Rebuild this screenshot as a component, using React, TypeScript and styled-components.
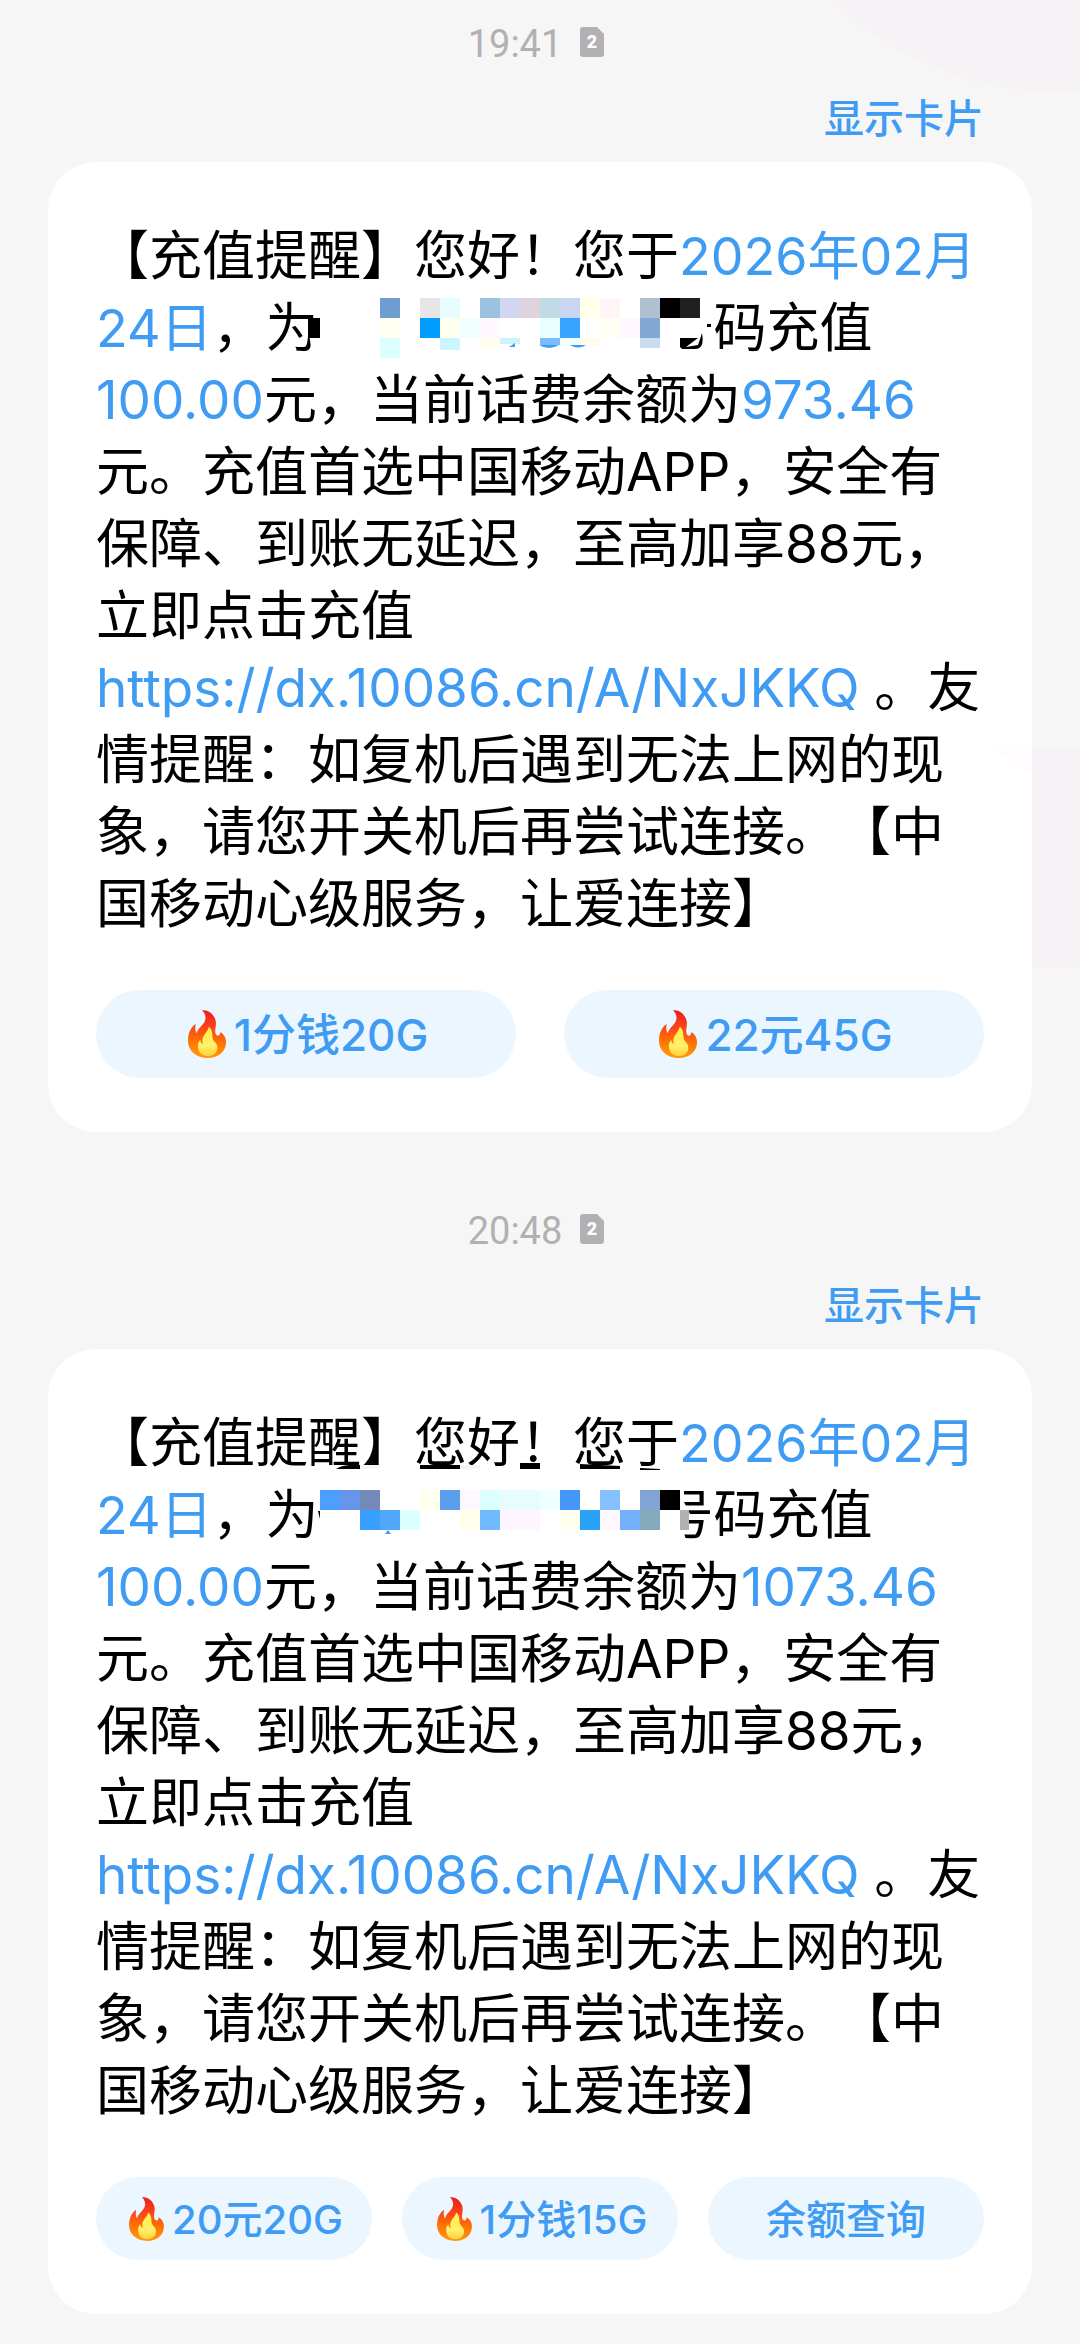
import React from "react";
import styled, { createGlobalStyle } from "styled-components";

const GlobalStyle = createGlobalStyle`
  * { box-sizing: border-box; }
  body {
    margin: 0;
    background: #f6f6f6;
    font-family: Inter, "Noto Sans CJK SC", sans-serif;
    text-spacing-trim: space-all;
  }
`;

const Page = styled.main`
  position: relative;
  overflow: hidden;
  min-height: 100vh;
  padding: 20px 48px 30px;
  display: flex;
  flex-direction: column;
  gap: 75px;
  background: #f6f6f6;
`;

const Glow = styled.svg`
  position: absolute;
  z-index: 1;
  top: 0;
  right: 0;
  fill: #f6f2f5;
  pointer-events: none;
`;

const Entry = styled.article`
  display: flex;
  flex-direction: column;
`;

const Stamp = styled.header`
  display: flex;
  justify-content: center;
  align-items: center;
  gap: 18px;
  height: 44px;
  padding-right: 8px;
  color: #b2b0b2;
  font: 400 38px/40px Roboto, sans-serif;
`;

const Time = styled.time`
  padding-top: 4px;
`;

const ShowCard = styled.a`
  align-self: flex-end;
  margin: 31px 0 19px;
  padding-right: 48px;
  color: #409cf3;
  font-size: 40px;
  font-weight: 500;
  line-height: 48px;
  text-decoration: none;
`;

const Card = styled.section`
  padding: 58px 48px 54px;
  border-radius: 48px;
  background: #fff;
`;

const Body = styled.p`
  margin: 0 0 50px;
  color: #000;
  font-size: 53px;
  line-height: 72px;
  white-space: nowrap;
`;

const Mark = styled.a`
  color: #409cf3;
  text-decoration: none;
`;

const DateMark = styled(Mark)`
  font-size: 52px;
  line-height: 1;
`;

const Hidden = styled.span`
  position: relative;
  display: inline-block;
  width: 342px;
  height: 1px;
`;

const Pixels = styled.svg<{ $raised: boolean }>`
  position: absolute;
  left: 1px;
  bottom: ${(p) => (p.$raised ? -11 : -16)}px;
  overflow: visible;
`;

const Actions = styled.div<{ $gap: number }>`
  display: flex;
  gap: ${(p) => p.$gap}px;
`;

const Action = styled.button<{ $compact: boolean }>`
  flex: 1 1 0;
  display: flex;
  justify-content: center;
  align-items: center;
  height: ${(p) => (p.$compact ? 83 : 88)}px;
  padding: 0 0 4px;
  border: 0;
  border-radius: 44px;
  background: #ecf6ff;
  color: #409cf3;
  font-family: inherit;
  font-size: ${(p) => (p.$compact ? 40 : 44)}px;
  font-weight: 500;
  white-space: nowrap;
`;

const FlameSvg = styled.svg<{ $compact: boolean }>`
  flex: none;
  width: ${(p) => (p.$compact ? 35 : 38)}px;
  height: ${(p) => (p.$compact ? 44 : 48)}px;
  margin: 4px 8px 0 4px;
`;

function Flame({ compact }: { compact: boolean }) {
  return (
    <FlameSvg $compact={compact} viewBox="0 0 114 144" aria-hidden="true">
      <defs>
        <linearGradient id="flameOuter" x1="0.5" y1="0" x2="0.45" y2="1">
          <stop offset="0" stopColor="#ee1c1c" />
          <stop offset="0.35" stopColor="#f9441a" />
          <stop offset="0.7" stopColor="#ff7800" />
          <stop offset="1" stopColor="#ff9c10" />
        </linearGradient>
        <linearGradient id="flameInner" x1="0.5" y1="0" x2="0.5" y2="1">
          <stop offset="0" stopColor="#fff04a" />
          <stop offset="0.65" stopColor="#fff06a" />
          <stop offset="1" stopColor="#ffd23c" />
        </linearGradient>
      </defs>
      <path
        fill="url(#flameOuter)"
        d="M42 1C60-2 78 12 83 32C86 46 80 58 82 68C84 79 96 82 97 66C109 74 114 84 114 95C115 126 90 144 59 144C25 144 0 123 0 92C0 70 8 52 23 42C21 52 21 62 26 70C29 60 34 54 42 46C56 32 56 14 42 1Z"
      />
      <path
        fill="url(#flameInner)"
        d="M62 51C61 61 52 68 47 78C42 86 42 94 45 101C39 100 37 95 37 89C29 96 28 107 31 117C34 131 45 138 60 138C76 138 88 128 88 114C89 104 83 98 77 92C72 85 74 76 72 66C70 58 67 54 62 51Z"
      />
    </FlameSvg>
  );
}

function SimBadge() {
  return (
    <svg width="24" height="30" viewBox="0 0 24 30" role="img" aria-label="SIM 2">
      <path
        fill="#b2b0b2"
        d="M3 0H17L24 7V27Q24 30 21 30H3Q0 30 0 27V3Q0 0 3 0Z"
      />
      <text x="12" y="21" textAnchor="middle" fontFamily="Roboto, sans-serif" fontSize="18" fontWeight="900" fill="#fff">
        2
      </text>
    </svg>
  );
}

type Cell = [number, number, number, number, string];

const firstCells: Cell[] = [
  [-12, 20, 12, 20, "#000"],
  [60, 0, 20, 20, "#6f9dd2"],
  [100, 0, 20, 20, "#e6e6e6"],
  [120, 0, 20, 20, "#e8fbff"],
  [160, 0, 20, 20, "#9cc2e2"],
  [180, 0, 20, 20, "#d4d5f0"],
  [200, 0, 20, 20, "#dfd3dc"],
  [220, 0, 20, 20, "#c0dbe6"],
  [240, 0, 20, 20, "#cad5f1"],
  [260, 0, 20, 20, "#ffffea"],
  [280, 0, 20, 20, "#fff4f6"],
  [320, 0, 20, 20, "#b0c0ce"],
  [340, 0, 20, 20, "#000"],
  [360, 0, 20, 20, "#202020"],
  [60, 20, 20, 20, "#fffff2"],
  [100, 20, 20, 20, "#009dff"],
  [120, 20, 20, 20, "#fffff0"],
  [140, 20, 20, 20, "#f0fffe"],
  [160, 20, 20, 20, "#fff9ff"],
  [220, 20, 20, 20, "#e7ffff"],
  [240, 20, 20, 20, "#38a4ff"],
  [280, 20, 20, 20, "#fffff4"],
  [300, 20, 20, 20, "#fff9ff"],
  [320, 20, 20, 20, "#83a8d3"],
  [60, 40, 20, 20, "#dcffff"],
  [120, 40, 20, 12, "#caf7ff"],
  [160, 40, 20, 10, "#fffff0"],
  [180, 40, 20, 6, "#caf2ff"],
  [220, 40, 20, 7, "#7bbcff"],
  [240, 40, 20, 7, "#f0ffff"],
  [260, 40, 20, 7, "#fffbe8"],
  [320, 40, 20, 10, "#c8ddef"],
];

const secondCells: Cell[] = [
  [40, -25, 20, 4, "#f6f4f6"],
  [140, -25, 20, 4, "#f7f2f7"],
  [0, 0, 20, 20, "#4b9fff"],
  [20, 0, 20, 20, "#6795ec"],
  [40, 0, 20, 20, "#7389b9"],
  [100, 0, 20, 20, "#fffff0"],
  [120, 0, 20, 20, "#5a9eec"],
  [140, 0, 20, 20, "#fff7ff"],
  [160, 0, 20, 20, "#dcffff"],
  [180, 0, 40, 20, "#e6fcff"],
  [220, 0, 20, 20, "#f0ffff"],
  [240, 0, 20, 20, "#4597f7"],
  [280, 0, 20, 20, "#86c1ff"],
  [320, 0, 20, 20, "#82a4d2"],
  [340, 0, 20, 20, "#000"],
  [40, 20, 20, 20, "#399fff"],
  [60, 20, 20, 20, "#51a8fb"],
  [80, 20, 20, 20, "#dcffff"],
  [140, 20, 20, 20, "#ffffec"],
  [160, 20, 20, 20, "#70b9ff"],
  [180, 20, 40, 20, "#fff5ff"],
  [240, 20, 20, 20, "#fffff0"],
  [260, 20, 20, 20, "#29a1f6"],
  [280, 20, 20, 20, "#fff9ff"],
  [300, 20, 20, 20, "#73b1ff"],
  [320, 20, 20, 20, "#85a9bd"],
  [360, 20, 9, 20, "#b3b0b4"],
];

function Mosaic({ second }: { second: boolean }) {
  return (
    <Hidden>
      <Pixels $raised={!second} width="340" height="60" viewBox="0 0 340 60" aria-hidden="true">
        {second ? (
          <path fill="#fff" d="M0-6H364V12L370 24L362 54H0Z" />
        ) : (
          <path fill="#fff" d="M-10 20Q-13 32-10 42L-8 58H386L391 28V-4H-4V20Z" />
        )}
        {(second ? secondCells : firstCells).map(([x, y, w, h, fill]) => (
          <rect key={`${x},${y}`} x={x} y={y} width={w} height={h} fill={fill} />
        ))}
        {second ? (
          <>
            <path d="M16-21Q24-26 40-25V-21ZM100-25H140V-21H100ZM200-27H220V-21H200ZM260-26L300-24V-21H260ZM320-22L340-21V-20H320Z" />
            <path fill="#399fff" d="M65 44L68 40L71 44Z" />
            <path d="M-2 21H0V29Z" />
          </>
        ) : (
          <>
            <path d="M360 40H378L366 49L378 47L382 35Q385 52 374 51H362L360 49Z" />
            <path d="M387 26H391V29H387Z" />
            <path fill="#409cf3" d="M189 49L195 45V49ZM219 47Q229 53 239 47ZM250 47Q258 52 266 47Z" />
          </>
        )}
      </Pixels>
    </Hidden>
  );
}

interface Message {
  time: string;
  balance: string;
  second: boolean;
  actions: { label: string; hot: boolean }[];
}

const messages: Message[] = [
  {
    time: "19:41",
    balance: "973.46",
    second: false,
    actions: [
      { label: "1分钱20G", hot: true },
      { label: "22元45G", hot: true },
    ],
  },
  {
    time: "20:48",
    balance: "1073.46",
    second: true,
    actions: [
      { label: "20元20G", hot: true },
      { label: "1分钱15G", hot: true },
      { label: "余额查询", hot: false },
    ],
  },
];

function MessageEntry({ time, balance, second, actions }: Message) {
  const compact = actions.length > 2;
  return (
    <Entry>
      <Stamp>
        <Time>{time}</Time>
        <SimBadge />
      </Stamp>
      <ShowCard href="#card">显示卡片</ShowCard>
      <Card>
        <Body>
          【充值提醒】您好！您于<DateMark href="#date">2026年02月<br />24日</DateMark>，为<Mosaic second={second} />号码充值<br />
          <Mark href="#amount">100.00</Mark>元，当前话费余额为<Mark href="#balance">{balance}</Mark><br />
          元。充值首选中国移动APP，安全有<br />
          保障、到账无延迟，至高加享88元，<br />
          立即点击充值<br />
          <Mark href="https://dx.10086.cn/A/NxJKKQ">https://dx.10086.cn/A/NxJKKQ</Mark> 。友<br />
          情提醒：如复机后遇到无法上网的现<br />
          象，请您开关机后再尝试连接。【中<br />
          国移动心级服务，让爱连接】
        </Body>
        <Actions $gap={compact ? 30 : 48}>
          {actions.map(({ label, hot }) => (
            <Action key={label} type="button" $compact={compact}>
              {hot && <Flame compact={compact} />}
              {label}
            </Action>
          ))}
        </Actions>
      </Card>
    </Entry>
  );
}

export default function App() {
  return (
    <>
      <GlobalStyle />
      <Page lang="zh-CN">
        <Glow width="260" height="970" viewBox="0 0 260 970" aria-hidden="true">
          <circle cx="240" cy="-238" r="330" />
          <path d="M212 749H260V968H212Z" />
          <path fill="#fffbff" d="M172 750H212V773Z" />
        </Glow>
        {messages.map((m) => (
          <MessageEntry key={m.time} {...m} />
        ))}
      </Page>
    </>
  );
}
